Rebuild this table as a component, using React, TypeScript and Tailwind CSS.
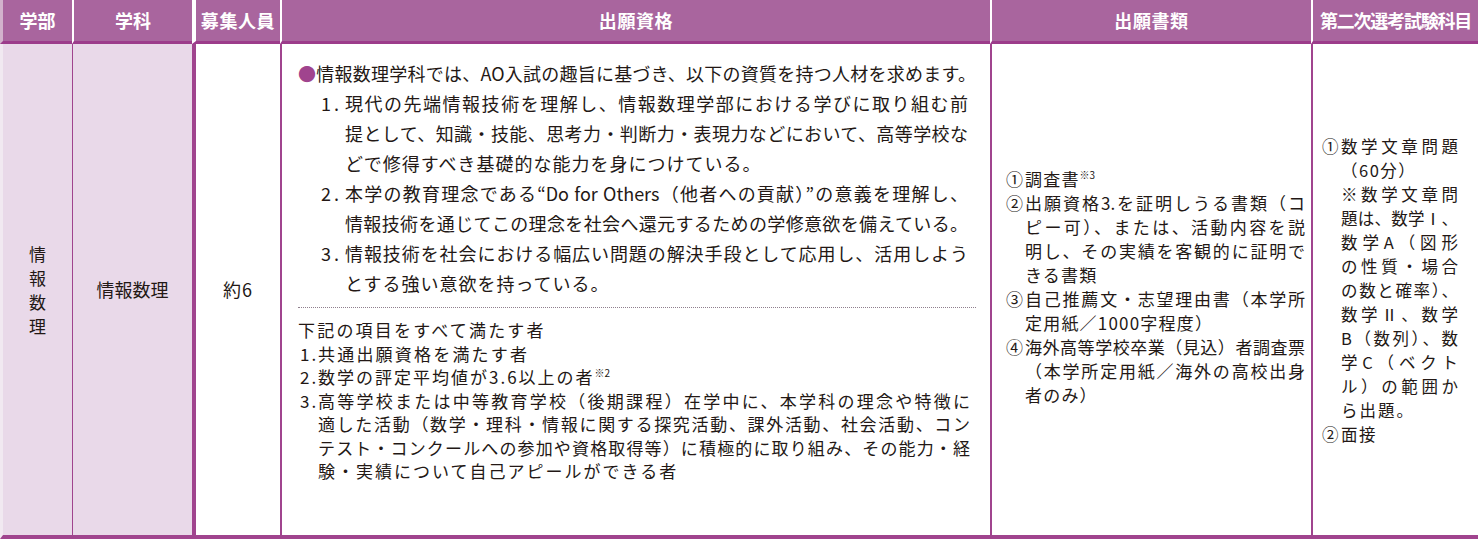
import React from "react";

const J = ({ children, className = "" }: { children: React.ReactNode; className?: string }) => (
  <div className={`whitespace-nowrap text-justify [text-align-last:justify] ${className}`}>{children}</div>
);

const S = ({ children, className = "" }: { children: React.ReactNode; className?: string }) => (
  <div className={`whitespace-nowrap ${className}`}>{children}</div>
);

const Sup = ({ children }: { children: React.ReactNode }) => (
  <span className="align-[7px] text-[10px] leading-none tracking-normal">{children}</span>
);

const NumBig = ({ n }: { n: string }) => (
  <span className="w-[27px] shrink-0 pl-[3px]">
    {n}
    <span className="ml-[3px]">.</span>
  </span>
);

const NumSmall = ({ n }: { n: string }) => (
  <span className="w-[20px] shrink-0 pl-[2px]">
    {n}
    <span className="ml-[2px]">.</span>
  </span>
);

export default function App() {
  return (
    <div className="h-[541px] w-[1478px] bg-white font-['Noto_Sans_CJK_JP','Noto_Sans',sans-serif] text-[#231815]">
      <div className="grid grid-cols-[72px_120px_88px_710px_321px_167px]">
        {/* header */}
        <div className="flex h-[44px] items-center justify-center border-b-[3px] border-l-[3px] border-b-[#9c3c8b] border-l-[#d2b2cc] bg-[#a9659e] text-[18px] font-bold text-white">
          学部
        </div>
        <div className="flex h-[44px] items-center justify-center border-b-[3px] border-l-2 border-b-[#9c3c8b] border-l-white bg-[#a9659e] text-[18px] font-bold text-white">
          学科
        </div>
        <div className="flex h-[44px] items-center justify-center border-b-[3px] border-l-4 border-b-[#9c3c8b] border-l-white bg-[#a9659e] text-[18px] font-bold tracking-[0.6px] text-white">
          募集人員
        </div>
        <div className="flex h-[44px] items-center justify-center border-b-[3px] border-l-2 border-b-[#9c3c8b] border-l-white bg-[#a9659e] text-[18px] font-bold tracking-[0.6px] text-white">
          出願資格
        </div>
        <div className="flex h-[44px] items-center justify-center border-b-[3px] border-l-2 border-b-[#9c3c8b] border-l-white bg-[#a9659e] text-[18px] font-bold tracking-[0.6px] text-white">
          出願書類
        </div>
        <div className="flex h-[44px] items-center justify-center border-b-[3px] border-l-2 border-b-[#9c3c8b] border-l-white bg-[#a9659e] text-[18px] font-bold tracking-[-1.2px] text-white">
          第二次選考試験科目
        </div>

        {/* body */}
        <div className="flex h-[495px] items-center justify-center border-b-4 border-l-[3px] border-b-[#a0448e] border-l-[#f1e9f1] bg-[#e9d9e9] text-[17px] leading-[24px]">
          <div className="flex flex-col items-center">
            <span>情</span>
            <span>報</span>
            <span>数</span>
            <span>理</span>
          </div>
        </div>
        <div className="flex h-[495px] items-center justify-center border-b-4 border-l border-b-[#a0448e] border-l-[#a0448e] bg-[#e9d9e9] text-[18px]">
          情報数理
        </div>
        <div className="flex h-[495px] items-center justify-center border-b-4 border-l-4 border-b-[#a0448e] border-l-[#a0448e] bg-white text-[18px] tracking-[1px]">
          約6
        </div>

        {/* 出願資格 */}
        <div className="h-[495px] border-b-4 border-l-2 border-b-[#a0448e] border-l-[#a0448e] bg-white pl-[16px] pr-[14px] pt-[14px]">
          <div className="text-[18px] leading-[30px]">
            <J>
              <span className="text-[#a0448e]">●</span>情報数理学科では、AO入試の趣旨に基づき、以下の資質を持つ人材を求めます。
            </J>
            <div className="flex pl-[20px]">
              <NumBig n="1" />
              <div className="w-[623px]">
                <J>現代の先端情報技術を理解し、情報数理学部における学びに取り組む前</J>
                <J>提として、知識・技能、思考力・判断力・表現力などにおいて、高等学校な</J>
                <S className="tracking-[1px]">どで修得すべき基礎的な能力を身につけている。</S>
              </div>
            </div>
            <div className="flex pl-[20px]">
              <NumBig n="2" />
              <div className="w-[623px]">
                <J>本学の教育理念である“Do for Others（他者への貢献）”の意義を理解し、</J>
                <J>情報技術を通じてこの理念を社会へ還元するための学修意欲を備えている。</J>
              </div>
            </div>
            <div className="flex pl-[20px]">
              <NumBig n="3" />
              <div className="w-[623px]">
                <J>情報技術を社会における幅広い問題の解決手段として応用し、活用しよう</J>
                <S className="tracking-[1px]">とする強い意欲を持っている。</S>
              </div>
            </div>
          </div>

          <div className="mt-[9px] border-t border-dotted border-t-[#8f7f8d]" />

          <div className="mt-[10px] text-[17px] leading-[23.5px]">
            <S className="tracking-[2.2px]">下記の項目をすべて満たす者</S>
            <div className="flex">
              <NumSmall n="1" />
              <S className="tracking-[2.2px]">共通出願資格を満たす者</S>
            </div>
            <div className="flex">
              <NumSmall n="2" />
              <S className="tracking-[2px]">
                数学の評定平均値が3.6以上の者<Sup>※2</Sup>
              </S>
            </div>
            <div className="flex">
              <NumSmall n="3" />
              <div className="w-[652px]">
                <J>高等学校または中等教育学校（後期課程）在学中に、本学科の理念や特徴に</J>
                <J>適した活動（数学・理科・情報に関する探究活動、課外活動、社会活動、コン</J>
                <J>テスト・コンクールへの参加や資格取得等）に積極的に取り組み、その能力・経</J>
                <S className="tracking-[2px]">験・実績について自己アピールができる者</S>
              </div>
            </div>
          </div>
        </div>

        {/* 出願書類 */}
        <div className="flex h-[495px] flex-col justify-center border-b-4 border-l-2 border-b-[#a0448e] border-l-[#a0448e] bg-white pb-[6px] pl-[14px] text-[17px] leading-[24px]">
          <div className="flex">
            <span className="w-[19px] shrink-0">①</span>
            <S className="tracking-[1.2px]">
              調査書<Sup>※3</Sup>
            </S>
          </div>
          <div className="flex">
            <span className="w-[19px] shrink-0">②</span>
            <div className="w-[280px]">
              <J>出願資格3.を証明しうる書類（コ</J>
              <J>ピー可）、または、活動内容を説</J>
              <J>明し、その実績を客観的に証明で</J>
              <S className="tracking-[1.2px]">きる書類</S>
            </div>
          </div>
          <div className="flex">
            <span className="w-[19px] shrink-0">③</span>
            <div className="w-[280px]">
              <J>自己推薦文・志望理由書（本学所</J>
              <S className="tracking-[1.2px]">定用紙／1000字程度）</S>
            </div>
          </div>
          <div className="flex">
            <span className="w-[19px] shrink-0">④</span>
            <div className="w-[280px]">
              <J>海外高等学校卒業（見込）者調査票</J>
              <J>（本学所定用紙／海外の高校出身</J>
              <S className="tracking-[1.2px]">者のみ）</S>
            </div>
          </div>
        </div>

        {/* 第二次選考試験科目 */}
        <div className="flex h-[495px] flex-col justify-center border-b-4 border-l-2 border-b-[#a0448e] border-l-[#a0448e] bg-white pl-[9px] text-[16.5px] leading-[24px]">
          <div className="flex">
            <span className="w-[19px] shrink-0">①</span>
            <div className="w-[117px]">
              <J>数学文章問題</J>
              <S className="tracking-[1.5px]">（60分）</S>
              <J>※数学文章問</J>
              <J>題は、数学Ⅰ、</J>
              <J>数学A（図形</J>
              <J>の性質・場合</J>
              <J>の数と確率）、</J>
              <J>数学Ⅱ、数学</J>
              <J>B（数列）、数</J>
              <J>学C（ベクト</J>
              <J>ル）の範囲か</J>
              <S className="tracking-[2px]">ら出題。</S>
            </div>
          </div>
          <div className="flex">
            <span className="w-[19px] shrink-0">②</span>
            <S className="tracking-[1.5px]">面接</S>
          </div>
        </div>
      </div>
    </div>
  );
}
